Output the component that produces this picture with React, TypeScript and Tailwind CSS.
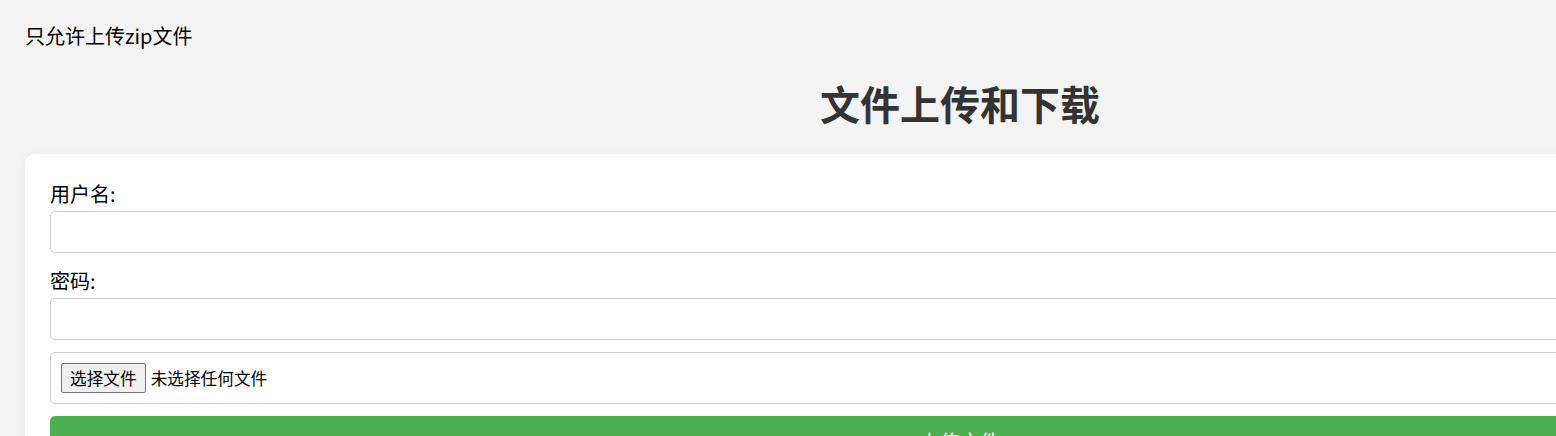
const cjk = "font-['Noto_Sans_CJK_SC','Noto_Sans',sans-serif]";

function Field({ label, type, className = "" }: { label: string; type: string; className?: string }) {
    return (
        <div className={`flex flex-col ${className}`}>
            <label className="text-[20px] leading-[30px] text-black mb-[2px]">{label}</label>
            <input
                type={type}
                className="h-[42px] w-full rounded-[5px] border border-[#cccccc] bg-white px-[10px] outline-none"
            />
        </div>
    );
}

export default function App() {
    return (
        <div className={`min-h-[436px] w-[1920px] bg-[#f3f3f3] px-[25px] ${cjk}`}>
            <p className="pt-[24px] text-[20px] leading-[24px] text-black">只允许上传zip文件</p>
            <h1 className="mt-[31px] text-center text-[40px] font-bold leading-[48px] text-[#333333]">
                文件上传和下载
            </h1>
            <div className="mt-[27px] rounded-[10px] bg-white px-[25px] pt-[25px] pb-[25px] shadow-[0_0_10px_rgba(0,0,0,0.05)]">
                <div className="flex flex-col gap-[12px]">
                    <Field label="用户名:" type="text" />
                    <Field label="密码:" type="password" className="mt-[1px]" />
                    <div className="flex h-[52px] items-center rounded-[5px] border border-[#cccccc] px-[10px]">
                        <button className="h-[30px] rounded-[2px] border border-[#767676] bg-[#efefef] px-[8px] text-[16.67px] leading-[20px] text-black">
                            选择文件
                        </button>
                        <span className="ml-[5px] text-[16.67px] text-black">未选择任何文件</span>
                    </div>
                    <button className="h-[50px] w-full rounded-[5px] bg-[#4caf50] text-[20px] leading-[25px] text-white">
                        上传文件
                    </button>
                </div>
            </div>
        </div>
    );
}
